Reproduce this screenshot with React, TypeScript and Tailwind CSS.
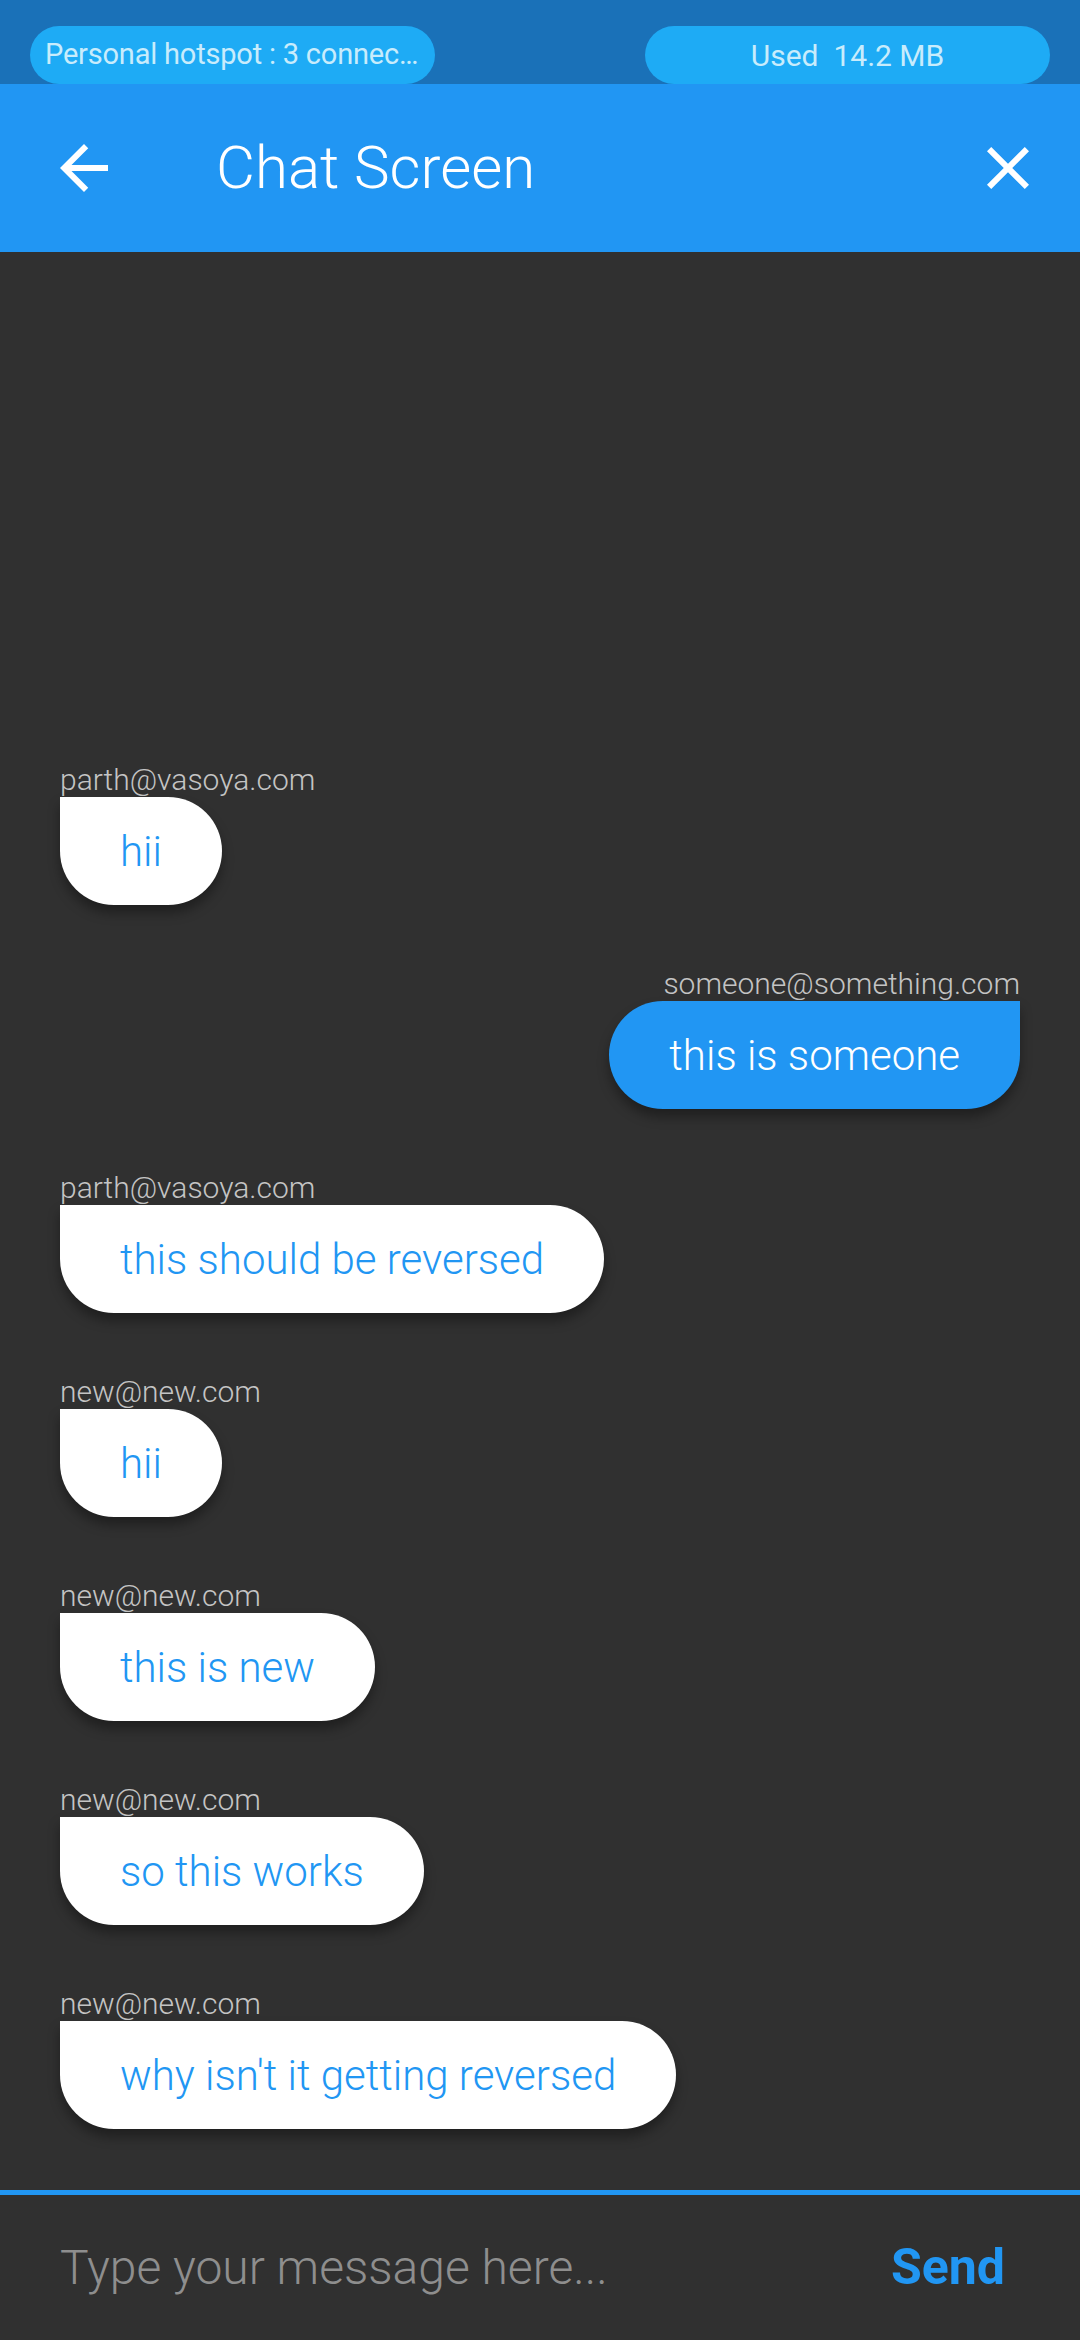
import React from "react";

type Message = {
	sender: string;
	text: string;
	mine?: boolean;
};

const messages: Message[] = [
	{ sender: "parth@vasoya.com", text: "hii" },
	{ sender: "someone@something.com", text: "this is someone", mine: true },
	{ sender: "parth@vasoya.com", text: "this should be reversed" },
	{ sender: "new@new.com", text: "hii" },
	{ sender: "new@new.com", text: "this is new" },
	{ sender: "new@new.com", text: "so this works" },
	{ sender: "new@new.com", text: "why isn't it getting reversed" },
];

function StatusBar() {
	return (
		<div className="h-[84px] bg-[#1a71b8] flex justify-between items-end px-[30px]">
			<div className="w-[405px] h-[58px] rounded-full bg-[#1eabf5] flex items-center pl-[15px]">
				<span className="text-[29px] text-[#c8ecfc] whitespace-nowrap tracking-[-0.2px]">
					Personal hotspot : 3 connec…
				</span>
			</div>
			<div className="w-[405px] h-[58px] rounded-full bg-[#1eabf5] flex items-center justify-center">
				<span className="text-[30px] text-[#c8ecfc] whitespace-pre">
					Used  14.2 MB
				</span>
			</div>
		</div>
	);
}

function Header() {
	return (
		<div className="h-[168px] bg-[#2196f3] flex items-center">
			<div className="w-[168px] h-full flex items-center justify-center">
				<svg width="72" height="72" viewBox="0 0 24 24" fill="#ffffff">
					<path d="M20 11H7.83l5.59-5.59L12 4l-8 8 8 8 1.41-1.41L7.83 13H20v-2z" />
				</svg>
			</div>
			<h1 className="flex-1 pl-[48px] text-[60px] font-light text-white leading-none">
				Chat Screen
			</h1>
			<div className="w-[144px] h-full flex items-center justify-center">
				<svg width="72" height="72" viewBox="0 0 24 24" fill="#ffffff">
					<path d="M19 6.41L17.59 5 12 10.59 6.41 5 5 6.41 10.59 12 5 17.59 6.41 19 12 13.41 17.59 19 19 17.59 13.41 12z" />
				</svg>
			</div>
		</div>
	);
}

function Bubble({ msg }: { msg: Message }) {
	return (
		<div className={`flex flex-col ${msg.mine ? "items-end" : "items-start"}`}>
			<span className="text-[30px] leading-[35px] font-light text-[#c4c4c4]">
				{msg.sender}
			</span>
			<div
				className={`h-[108px] px-[60px] flex items-center text-[42px] font-light shadow-[0_8px_12px_rgba(0,0,0,0.35)] ${
					msg.mine
						? "bg-[#2196f3] text-white rounded-tl-[54px] rounded-bl-[54px] rounded-br-[54px]"
						: "bg-white text-[#2196f3] rounded-tr-[54px] rounded-bl-[54px] rounded-br-[54px]"
				}`}>
				{msg.text}
			</div>
		</div>
	);
}

export default function App() {
	return (
		<div className="w-[1080px] h-[2340px] flex flex-col bg-[#303030] font-['Roboto',sans-serif] overflow-hidden">
			<StatusBar />
			<Header />

			{/* messages stick to the bottom */}
			<div className="flex-1 flex flex-col justify-end gap-[61px] px-[60px] pb-[61px]">
				{messages.map((m, i) => (
					<Bubble key={i} msg={m} />
				))}
			</div>

			<div className="h-[5px] bg-[#2196f3]" />
			<div className="h-[145px] flex items-center pl-[60px] pr-[75px]">
				<span className="flex-1 text-[48px] font-light text-[#8e8e8e]">
					Type your message here...
				</span>
				<span className="text-[50px] font-bold text-[#2196f3]">Send</span>
			</div>
		</div>
	);
}
